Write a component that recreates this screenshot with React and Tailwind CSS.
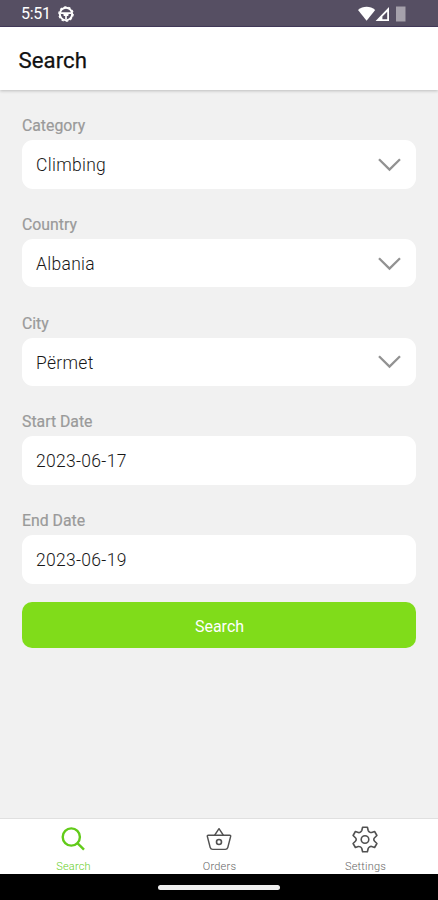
import React from 'react';

const fields = [
    { label: 'Category', value: 'Climbing', select: true },
    { label: 'Country', value: 'Albania', select: true },
    { label: 'City', value: 'Përmet', select: true },
    { label: 'Start Date', value: '2023-06-17' },
    { label: 'End Date', value: '2023-06-19' },
];

const SearchIcon = () => (
    <svg width="24" height="24" viewBox="0 0 24 24" fill="none" stroke="currentColor" strokeWidth="2.4">
        <circle cx="10.3" cy="10" r="8.6" />
        <path d="M16.4 16.1 23 22.7" />
    </svg>
);

const BasketIcon = () => (
    <svg width="26" height="24" viewBox="0 0 26 24" fill="none" stroke="currentColor" strokeWidth="1.4" strokeLinejoin="round" strokeLinecap="round">
        <path d="M2.2 8.2h21.6a.9.9 0 0 1 .9 1.1l-2.9 11.2a2.6 2.6 0 0 1-2.5 1.9H6.7a2.6 2.6 0 0 1-2.5-1.9L1.3 9.3a.9.9 0 0 1 .9-1.1Z" />
        <path d="M8.8 8 13 1.7 17.2 8" />
        <circle cx="13" cy="15" r="2.5" strokeWidth="1.6" />
    </svg>
);

const GearIcon = () => (
    <svg width="26" height="27" viewBox="0 0 26 27" fill="none" stroke="currentColor" strokeWidth="1.6" strokeLinejoin="round">
        <path d="M10.6 1.2h4.8l.8 3.3q.3 1 1.4 1.6t2.1.4l2.9-1 2.3 4-2.3 2.3q-.8.8-.8 1.7t.8 1.7l2.3 2.3-2.3 4-2.9-1q-1-.3-2.1.4t-1.4 1.6l-.8 3.3h-4.8l-.8-3.3q-.3-1-1.4-1.6t-2.1-.4l-2.9 1-2.3-4 2.3-2.3q.8-.8.8-1.7t-.8-1.7L1.1 9.5l2.3-4 2.9 1q1 .3 2.1-.4t1.4-1.6Z" />
        <circle cx="13" cy="13.5" r="3.8" />
    </svg>
);

const StatusBar = () => (
    <div className="flex h-[27px] shrink-0 items-center border-b border-[#443b5c] bg-[#564f63] pl-[21px] pr-[30px] text-white">
        <span className="pt-[2px] text-[16px] leading-none tracking-[-0.3px]">5:51</span>
        <svg className="ml-[7px] mt-[2px]" width="16" height="16" viewBox="0 0 16 16" fill="none" stroke="currentColor">
            <circle cx="8" cy="8" r="6.2" strokeWidth="2" />
            <circle cx="8" cy="8" r="7.2" strokeWidth="1.2" strokeDasharray="2.4 2.12" />
            <path d="M3 7.2h10M8 8v5M5.5 9.2 8 8l2.5 1.2" strokeWidth="1.7" />
        </svg>
        <svg className="ml-auto mt-[2px]" width="50" height="16" viewBox="0 0 50 16">
            <path d="M0 4.1C5-.3 12.2-.3 17.2 4.1L8.6 14.8Z" fill="#fff" />
            <path d="M31 1v14H17.6ZM29.2 5.7 24.4 10.6v2.6h4.8Z" fill="#fff" fillRule="evenodd" />
            <path d="M38 .5h9.5v15H38Z" fill="#a5a1ab" />
        </svg>
    </div>
);

const Field = ({ label, value, select }) => (
    <div className="h-[98.8px]">
        <div className="h-[24px] text-[15.8px] leading-[20px] text-[#9a9a9a] [-webkit-text-stroke:0.2px_#9a9a9a]">{label}</div>
        <div className="flex h-[48.5px] items-center justify-between rounded-[11px] bg-white pl-[14px] pr-[15px]">
            <span className="pt-[3px] text-[17.5px] font-light leading-none tracking-[0.3px] text-[#181818]">{value}</span>
            {select && (
                <svg className="mt-px" width="24" height="14" viewBox="0 0 24 14" fill="none" stroke="#929292" strokeWidth="2.3">
                    <path d="M2 1.2 12.5 11.6 23 1.2" />
                </svg>
            )}
        </div>
    </div>
);

const Tab = ({ label, icon, active }) => (
    <div className={`flex flex-1 flex-col items-center pt-[6px] ${active ? 'text-[#62cb19]' : 'text-[#515151]'}`}>
        <div className="flex h-[28px] items-center">{icon}</div>
        <span className={`mt-[7px] pl-px text-[11px] font-light leading-[14px] tracking-[0.2px] ${active ? 'text-[#66ce25]' : 'text-[#666666]'}`}>{label}</span>
    </div>
);

const App = () => {
    return (
        <div className="flex h-[900px] w-[438px] flex-col overflow-hidden bg-[#f1f1f1] font-[Roboto,sans-serif]">
            <StatusBar />
            <header className="z-10 flex h-[63px] shrink-0 items-center bg-white pl-[18.5px] pt-[3px] shadow-[0_1px_3px_rgba(0,0,0,0.22)]">
                <h1 className="text-[22.2px] font-normal leading-none tracking-[0.05px] text-[#111111] [-webkit-text-stroke:0.25px_#111111]">Search</h1>
            </header>

            <main className="flex-1 px-[22px] pt-[26px]">
                <div className="h-[486px]">
                    {fields.map((field) => (
                        <Field key={field.label} {...field} />
                    ))}
                </div>
                <button className="flex h-[46px] w-full items-center justify-center rounded-[10px] bg-[#80dc1a] pl-px pt-[3px] text-[16px] leading-none text-white">
                    Search
                </button>
            </main>

            <nav className="flex h-[56px] shrink-0 border-t border-[#e0e0e0] bg-white">
                <Tab label="Search" icon={<SearchIcon />} active />
                <Tab label="Orders" icon={<BasketIcon />} />
                <Tab label="Settings" icon={<GearIcon />} />
            </nav>
            <div className="flex h-[26px] shrink-0 items-center justify-center bg-black">
                <div className="h-[5px] w-[122px] rounded-full bg-[#eeeeee]" />
            </div>
        </div>
    );
};

export default App;
